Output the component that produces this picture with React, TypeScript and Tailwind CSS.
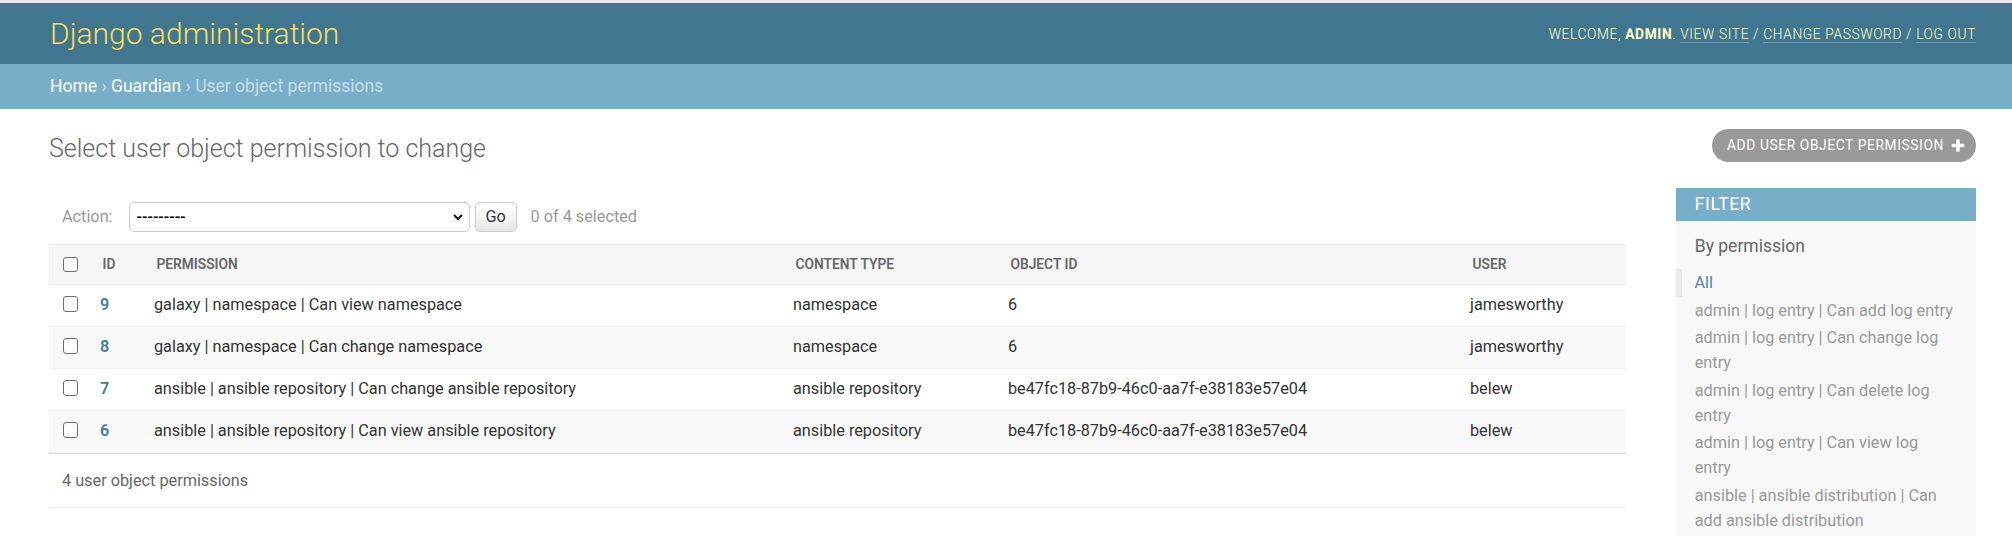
import React from "react";

const rows = [
  { id: 9, perm: "galaxy | namespace | Can view namespace", ct: "namespace", obj: "6", user: "jamesworthy" },
  { id: 8, perm: "galaxy | namespace | Can change namespace", ct: "namespace", obj: "6", user: "jamesworthy" },
  { id: 7, perm: "ansible | ansible repository | Can change ansible repository", ct: "ansible repository", obj: "be47fc18-87b9-46c0-aa7f-e38183e57e04", user: "belew" },
  { id: 6, perm: "ansible | ansible repository | Can view ansible repository", ct: "ansible repository", obj: "be47fc18-87b9-46c0-aa7f-e38183e57e04", user: "belew" },
];

const filterItems = [
  "admin | log entry | Can add log entry",
  "admin | log entry | Can change log entry",
  "admin | log entry | Can delete log entry",
  "admin | log entry | Can view log entry",
  "ansible | ansible distribution | Can add ansible distribution",
];

function Box() {
  return <span className="block w-[15.5px] h-[15.5px] border-[1.3px] border-[#6f6f6f] rounded-[3px] bg-white" />;
}

export default function App() {
  return (
    <div className="h-[536px] overflow-hidden bg-white font-[Roboto,sans-serif]">
      <div className="h-[3px] bg-[#e8e8e8]" />
      <header className="h-[61px] bg-[#417690] flex items-center justify-between pl-[50px] pr-[36px]">
        <h1 className="text-[30px] font-light text-[#f5dd5d] leading-[36px] mt-[1px]">Django administration</h1>
        <div className="text-[13.75px] font-light uppercase tracking-[0.625px] text-[#ffffcc] leading-[20px]">
          Welcome, <strong className="font-bold">admin</strong>.{" "}
          <a className="border-b border-[rgba(255,255,255,0.25)]">View site</a> /{" "}
          <a className="border-b border-[rgba(255,255,255,0.25)]">Change password</a> /{" "}
          <a className="border-b border-[rgba(255,255,255,0.25)]">Log out</a>
        </div>
      </header>
      <div className="h-[45px] bg-[#79aec8] px-[50px] flex items-center text-[17.5px] text-[#c4dce8]">
        <span>
          <a className="text-white">Home</a> › <a className="text-white">Guardian</a> › User object permissions
        </span>
      </div>
      <div className="pr-[36px] pl-[49px] pt-[20px]">
        <div className="flex justify-between items-start">
          <h1 className="mt-[5px] text-[25px] font-light text-[#666] leading-[29px]">
            Select user object permission to change
          </h1>
          <a className="h-[33px] rounded-full bg-[#999] text-white text-[13.75px] tracking-[0.625px] uppercase flex items-center pl-[15px] pr-[10px]">
            <span>Add user object permission</span>
            <svg viewBox="0 0 1792 1792" className="w-[16px] h-[16px] ml-[6px]" fill="#fff">
              <path d="M1600 736v192q0 40-28 68t-68 28h-416v416q0 40-28 68t-68 28h-192q-40 0-68-28t-28-68v-416h-416q-40 0-68-28t-28-68v-192q0-40 28-68t68-28h416v-416q0-40 28-68t68-28h192q40 0 68 28t28 68v416h416q40 0 68 28t28 68z" />
            </svg>
          </a>
        </div>
        <div className="flex gap-[50px] mt-[25px]">
          <div className="flex-1 min-w-0">
            <div className="pt-[14px] pb-[12px] pl-[13px] flex items-center text-[16.25px] text-[#999] h-[56px]">
              <span>Action:</span>
              <div className="ml-[16px] w-[341px] h-[30px] border border-[#ccc] rounded-[5px] flex items-center justify-between pl-[7px] pr-[5px] text-black">
                <span className="text-[16px] font-medium">---------</span>
                <svg viewBox="0 0 12 12" className="w-[12px] h-[12px]">
                  <path d="M2 4 L6 8 L10 4" fill="none" stroke="#111" strokeWidth="2" />
                </svg>
              </div>
              <div className="ml-[5px] w-[42px] h-[30px] border border-[#ccc] rounded-[5px] bg-white shadow-[inset_0_-15px_20px_-10px_rgba(0,0,0,0.15)] flex items-center justify-center text-[#333]">
                Go
              </div>
              <span className="ml-[14px]">0 of 4 selected</span>
            </div>
            <table className="w-full table-fixed border-collapse">
              <colgroup>
                <col className="w-[41px]" />
                <col className="w-[54px]" />
                <col className="w-[639px]" />
                <col className="w-[215px]" />
                <col className="w-[462px]" />
                <col />
              </colgroup>
              <thead>
                <tr className="h-[40px] bg-[#f6f6f6] border-y border-[#eee] text-[13.75px] font-semibold text-[#666] uppercase text-left">
                  <th className="pl-[13.5px] align-middle"><Box /></th>
                  <th className="pl-[12.5px] font-semibold">ID</th>
                  <th className="pl-[12.5px] font-semibold">Permission</th>
                  <th className="pl-[12.5px] font-semibold">Content type</th>
                  <th className="pl-[12.5px] font-semibold">Object ID</th>
                  <th className="pl-[12.5px] font-semibold">User</th>
                </tr>
              </thead>
              <tbody>
                {rows.map((r, i) => (
                  <tr key={r.id} className={`${i % 2 === 1 ? "bg-[#f9f9f9]" : "bg-white"} border-b border-[#eee] text-[16.25px] leading-[20px] text-[#333] h-[42px]`}>
                    <td className="align-top pt-[11px] pl-[13.5px]"><Box /></td>
                    <td className="align-top pt-[10px] pl-[10px] font-semibold text-[#447e9b]">{r.id}</td>
                    <td className="align-top pt-[10px] pl-[10px] whitespace-nowrap">{r.perm}</td>
                    <td className="align-top pt-[10px] pl-[10px] whitespace-nowrap">{r.ct}</td>
                    <td className="align-top pt-[10px] pl-[10px] whitespace-nowrap">{r.obj}</td>
                    <td className="align-top pt-[10px] pl-[10px] whitespace-nowrap">{r.user}</td>
                  </tr>
                ))}
              </tbody>
            </table>
            <div className="border-t border-[#ddd] border-b border-b-[#eee] py-[12.5px] pl-[13px] text-[16.25px] leading-[27.5px] text-[#666]">
              4 user object permissions
            </div>
          </div>
          <div className="w-[300px] shrink-0 bg-[#f8f8f8] min-h-[400px]">
            <h2 className="h-[33px] bg-[#79aec8] text-white text-[17.5px] uppercase tracking-[0.625px] px-[18.75px] flex items-center">
              Filter
            </h2>
            <h3 className="mt-[15px] px-[18.75px] text-[17.5px] leading-[20.5px] text-[#666]">By permission</h3>
            <ul className="mt-[12.5px] px-[18.75px] text-[16.25px] leading-[25px] text-[#999]">
              <li className="py-[1.25px] border-l-[6.25px] border-[#eaeaea] -ml-[18.75px] pl-[12.5px] text-[#5b80b2]">All</li>
              {filterItems.map((f) => (
                <li key={f} className="py-[1.25px]">{f}</li>
              ))}
            </ul>
          </div>
        </div>
      </div>
    </div>
  );
}
